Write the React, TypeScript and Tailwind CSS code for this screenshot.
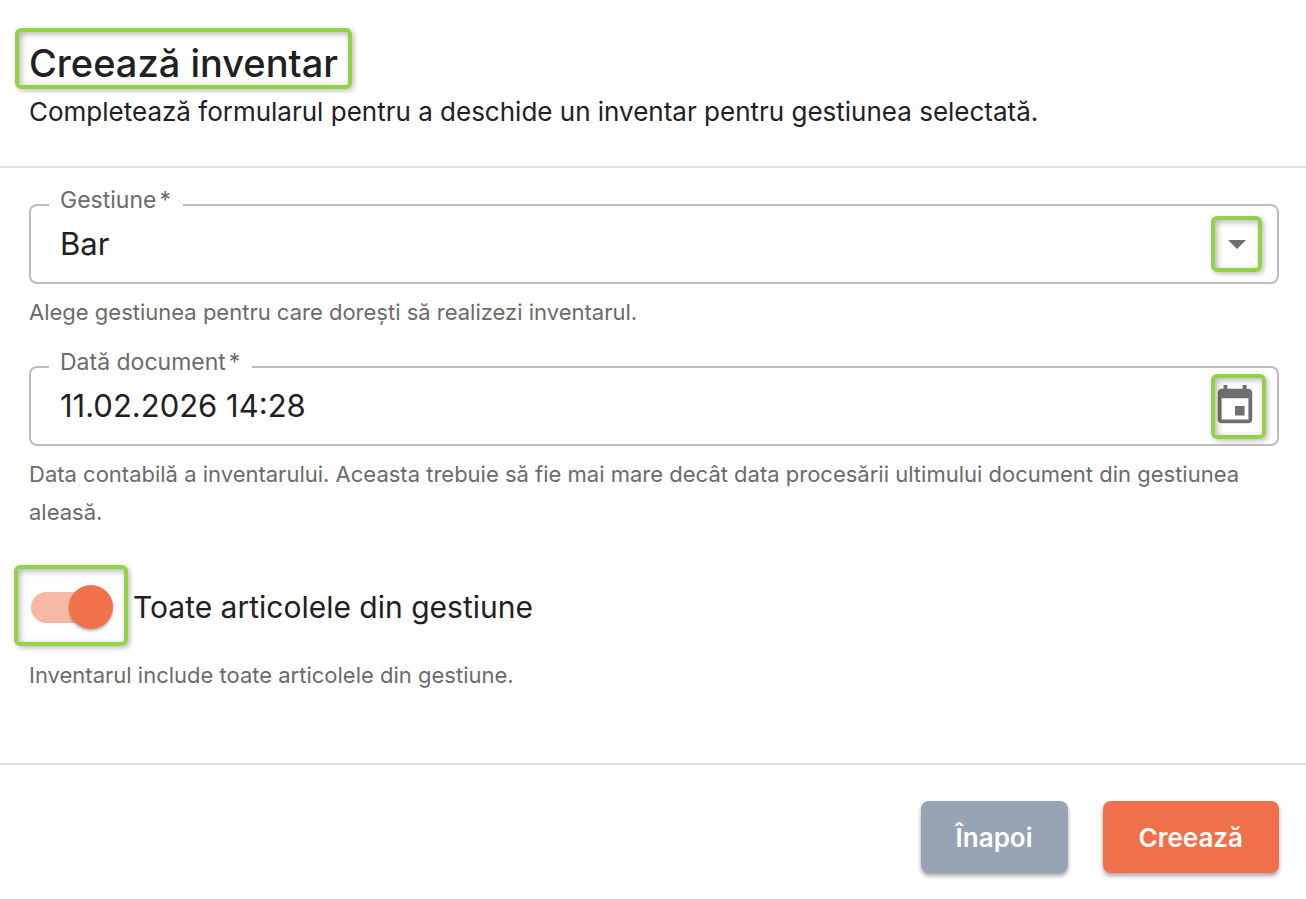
import React, { useState } from "react";

type HighlightProps = { className: string };

function Highlight({ className }: HighlightProps) {
  return (
    <span
      aria-hidden="true"
      className={`pointer-events-none absolute rounded-[6px] border-4 border-[#92d247] shadow-[2px_2px_5px_rgba(0,0,0,0.25),inset_2px_2px_6px_rgba(0,0,0,0.3)] ${className}`}
    />
  );
}

type FieldProps = {
  id: string;
  label: string;
  hint: string;
  children: React.ReactNode;
};

function Field({ id, label, hint, children }: FieldProps) {
  return (
    <div>
      <div className="relative flex h-20 items-center rounded-lg border-2 border-[#bdbdbd]">
        <label
          htmlFor={id}
          className="absolute -top-5 left-[18px] bg-white pr-3 pl-[11px] text-[23px] leading-7 text-[#6b6b6b]"
        >
          {label}
          <span className="ml-[3px]">*</span>
        </label>
        {children}
      </div>
      <p id={`${id}-hint`} className="mt-[9px] text-[22px] leading-[38px] text-[#6b6b6b]">
        {hint}
      </p>
    </div>
  );
}

export default function App() {
  const [store, setStore] = useState("Bar");
  const [date, setDate] = useState("11.02.2026 14:28");
  const [all, setAll] = useState(true);

  return (
    <form
      className="bg-white font-['Inter',sans-serif] text-[#212121]"
      onSubmit={(e) => e.preventDefault()}
    >
      <header className="border-b-2 border-[#e0e0e0] pt-[39px] pr-[27px] pb-[34px] pl-[29px]">
        <h1 className="relative w-fit text-[38px] leading-12 font-medium">
          Creează inventar
          <Highlight className="-top-[11px] -right-[14px] -bottom-[2px] -left-[14px]" />
        </h1>
        <p className="mt-[5px] text-[26px] leading-10">
          Completează formularul pentru a deschide un inventar pentru gestiunea selectată.
        </p>
      </header>

      <main className="border-b-2 border-[#e0e0e0] pt-9 pr-[27px] pb-[69px] pl-[29px]">
        <Field
          id="store"
          label="Gestiune"
          hint="Alege gestiunea pentru care dorești să realizezi inventarul."
        >
          <select
            id="store"
            aria-describedby="store-hint"
            value={store}
            onChange={(e) => setStore(e.target.value)}
            className="h-full w-full appearance-none bg-transparent pr-20 pl-[29px] text-[31px] outline-none"
          >
            <option>Bar</option>
          </select>
          <span className="pointer-events-none absolute top-[10px] right-[15px] flex h-14 w-[51px] items-center justify-center">
            <svg viewBox="0 0 18 9" className="h-[9px] w-[18px]" aria-hidden="true">
              <path d="M0 0h18l-9 9z" fill="#6f6f6f" />
            </svg>
            <Highlight className="inset-0" />
          </span>
        </Field>

        <div className="mt-[35px]">
          <Field
            id="date"
            label="Dată document"
            hint="Data contabilă a inventarului. Aceasta trebuie să fie mai mare decât data procesării ultimului document din gestiunea aleasă."
          >
            <input
              id="date"
              type="text"
              aria-describedby="date-hint"
              value={date}
              onChange={(e) => setDate(e.target.value)}
              className="h-full w-full bg-transparent pr-20 pb-[2px] pl-[29px] text-[31px] outline-none"
            />
            <button
              type="button"
              aria-label="Alege data"
              className="absolute top-[6px] right-[11px] flex h-[65px] w-[55px] justify-start pt-[9px] pl-px"
            >
              <svg viewBox="0 0 24 24" className="size-[46px] shrink-0" aria-hidden="true">
                <path
                  d="M17 12h-5v5h5v-5zM16 1v2H8V1H6v2H5c-1.110 0-1.990.9-1.990 2L3 19c0 1.100.89 2 2 2h14c1.100 0 2-.9 2-2V5c0-1.100-.9-2-2-2h-1V1h-2zm3 18H5V8h14v11z"
                  fill="#6f6f6f"
                />
              </svg>
              <Highlight className="inset-0" />
            </button>
          </Field>
        </div>

        <div className="mt-9 flex h-20 items-center">
          <label className="relative flex cursor-pointer items-center gap-5 text-[30px] leading-10">
            <input
              type="checkbox"
              role="switch"
              aria-describedby="all-hint"
              checked={all}
              onChange={(e) => setAll(e.target.checked)}
              className="peer sr-only"
            />
            <span className="relative flex h-11 w-[84px] items-center justify-start before:absolute before:right-1 before:left-[2px] before:h-[31px] before:rounded-full before:bg-[#f7b8a5] peer-checked:justify-end">
              <span className="relative size-11 rounded-full bg-[#f0714b] shadow-[0_2px_3px_rgba(0,0,0,0.3)]" />
              <Highlight className="-top-5 -right-[15px] -bottom-[17px] -left-[15px]" />
            </span>
            Toate articolele din gestiune
          </label>
        </div>
        <p id="all-hint" className="mt-[9px] text-[22px] leading-[38px] text-[#6b6b6b]">
          Inventarul include toate articolele din gestiune.
        </p>
      </main>

      <footer className="flex justify-end gap-[35px] pt-9 pr-[27px] pb-[26px] text-[26px] font-semibold text-white">
        <button
          type="button"
          className="h-[72px] rounded-lg bg-[#98a3b3] px-[35px] shadow-[0_3px_4px_rgba(0,0,0,0.35)]"
        >
          Înapoi
        </button>
        <button
          type="submit"
          className="h-[72px] rounded-lg bg-[#ef704a] px-9 shadow-[0_3px_4px_rgba(0,0,0,0.35)]"
        >
          Creează
        </button>
      </footer>
    </form>
  );
}
